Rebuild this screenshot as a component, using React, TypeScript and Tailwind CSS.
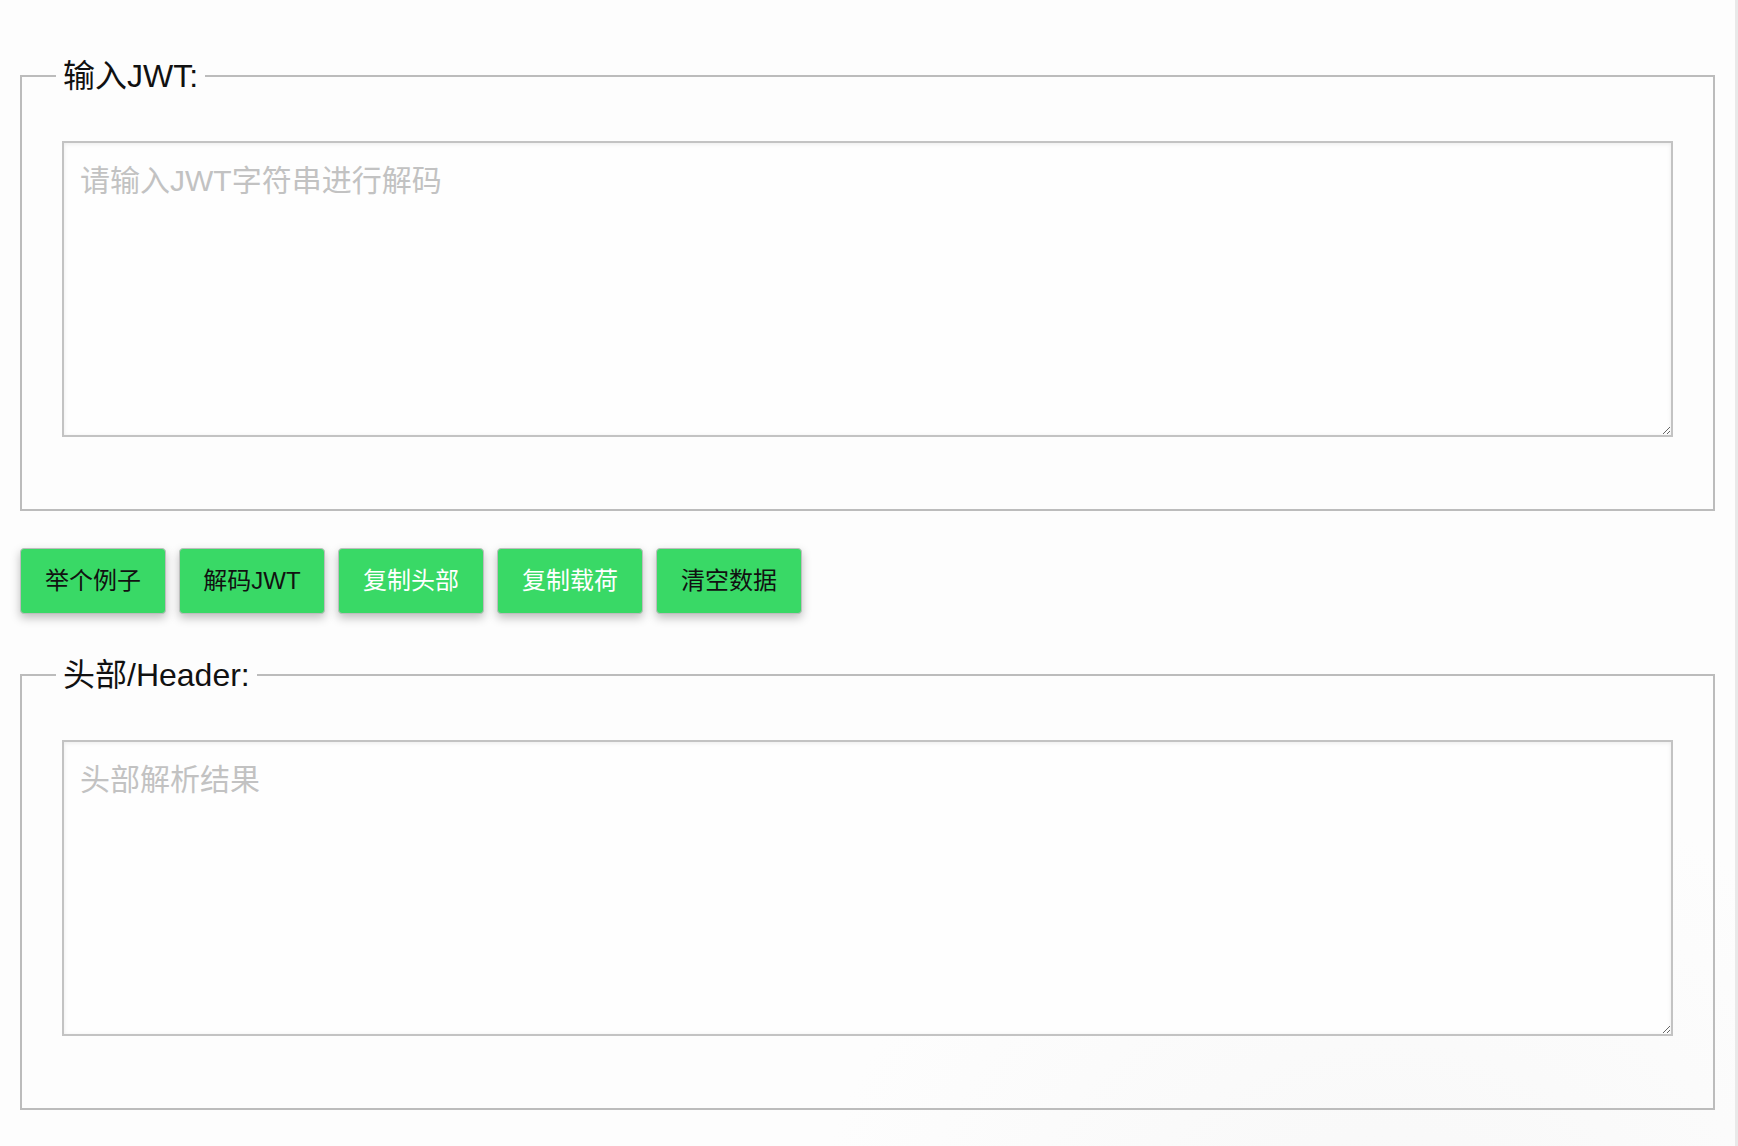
import React from "react";

const font = { fontFamily: '"Liberation Sans", "Noto Sans CJK SC", sans-serif' };

function Panel({ label, placeholder }: { label: string; placeholder: string }) {
  return (
    <fieldset className="border-2 border-solid border-[#bcbcbc] p-0 m-0 min-w-0">
      <legend className="ml-[34px] px-[7px] text-[32px] leading-[40px] text-[#111]">{label}</legend>
      <div className="px-[40px] pt-[45px] pb-[72px]">
        <textarea
          placeholder={placeholder}
          className="block w-full h-[296px] border-2 border-[#c3c3c3] bg-[#fefefe] px-[16px] pt-[18px] pb-[14px] text-[30px] leading-[40px] text-[#222] placeholder:text-[#c2c2c2] shadow-[inset_0_1px_4px_rgba(0,0,0,0.08)] outline-none"
          style={font}
        />
      </div>
    </fieldset>
  );
}

export default function App() {
  const buttons = [
    { label: "举个例子", light: false },
    { label: "解码JWT", light: false },
    { label: "复制头部", light: true },
    { label: "复制载荷", light: true },
    { label: "清空数据", light: false },
  ];

  return (
    <div className="flex min-h-screen bg-[#fdfdfd]" style={font}>
      <main className="flex-1 px-[20px] pt-[56px] pb-[37px] bg-[radial-gradient(ellipse_at_80%_115%,#f7f7f7_0%,#fdfdfd_30%)]">
        {/* JWT input */}
        <Panel label="输入JWT:" placeholder="请输入JWT字符串进行解码" />

        {/* Actions */}
        <div className="flex gap-[13px] mt-[37px] mb-[41px]">
          {buttons.map((b) => (
            <button
              key={b.label}
              className={
                "w-[146px] h-[66px] rounded-[4px] border border-[#bdbdbd] bg-[#39d966] text-[24px] shadow-[0_4px_10px_rgba(0,0,0,0.25)] " +
                (b.light ? "text-white" : "text-[#111]")
              }
            >
              {b.label}
            </button>
          ))}
        </div>

        {/* Header output */}
        <Panel label="头部/Header:" placeholder="头部解析结果" />
      </main>
      <div className="w-[3px] bg-[#e9e9e9]" />
    </div>
  );
}
